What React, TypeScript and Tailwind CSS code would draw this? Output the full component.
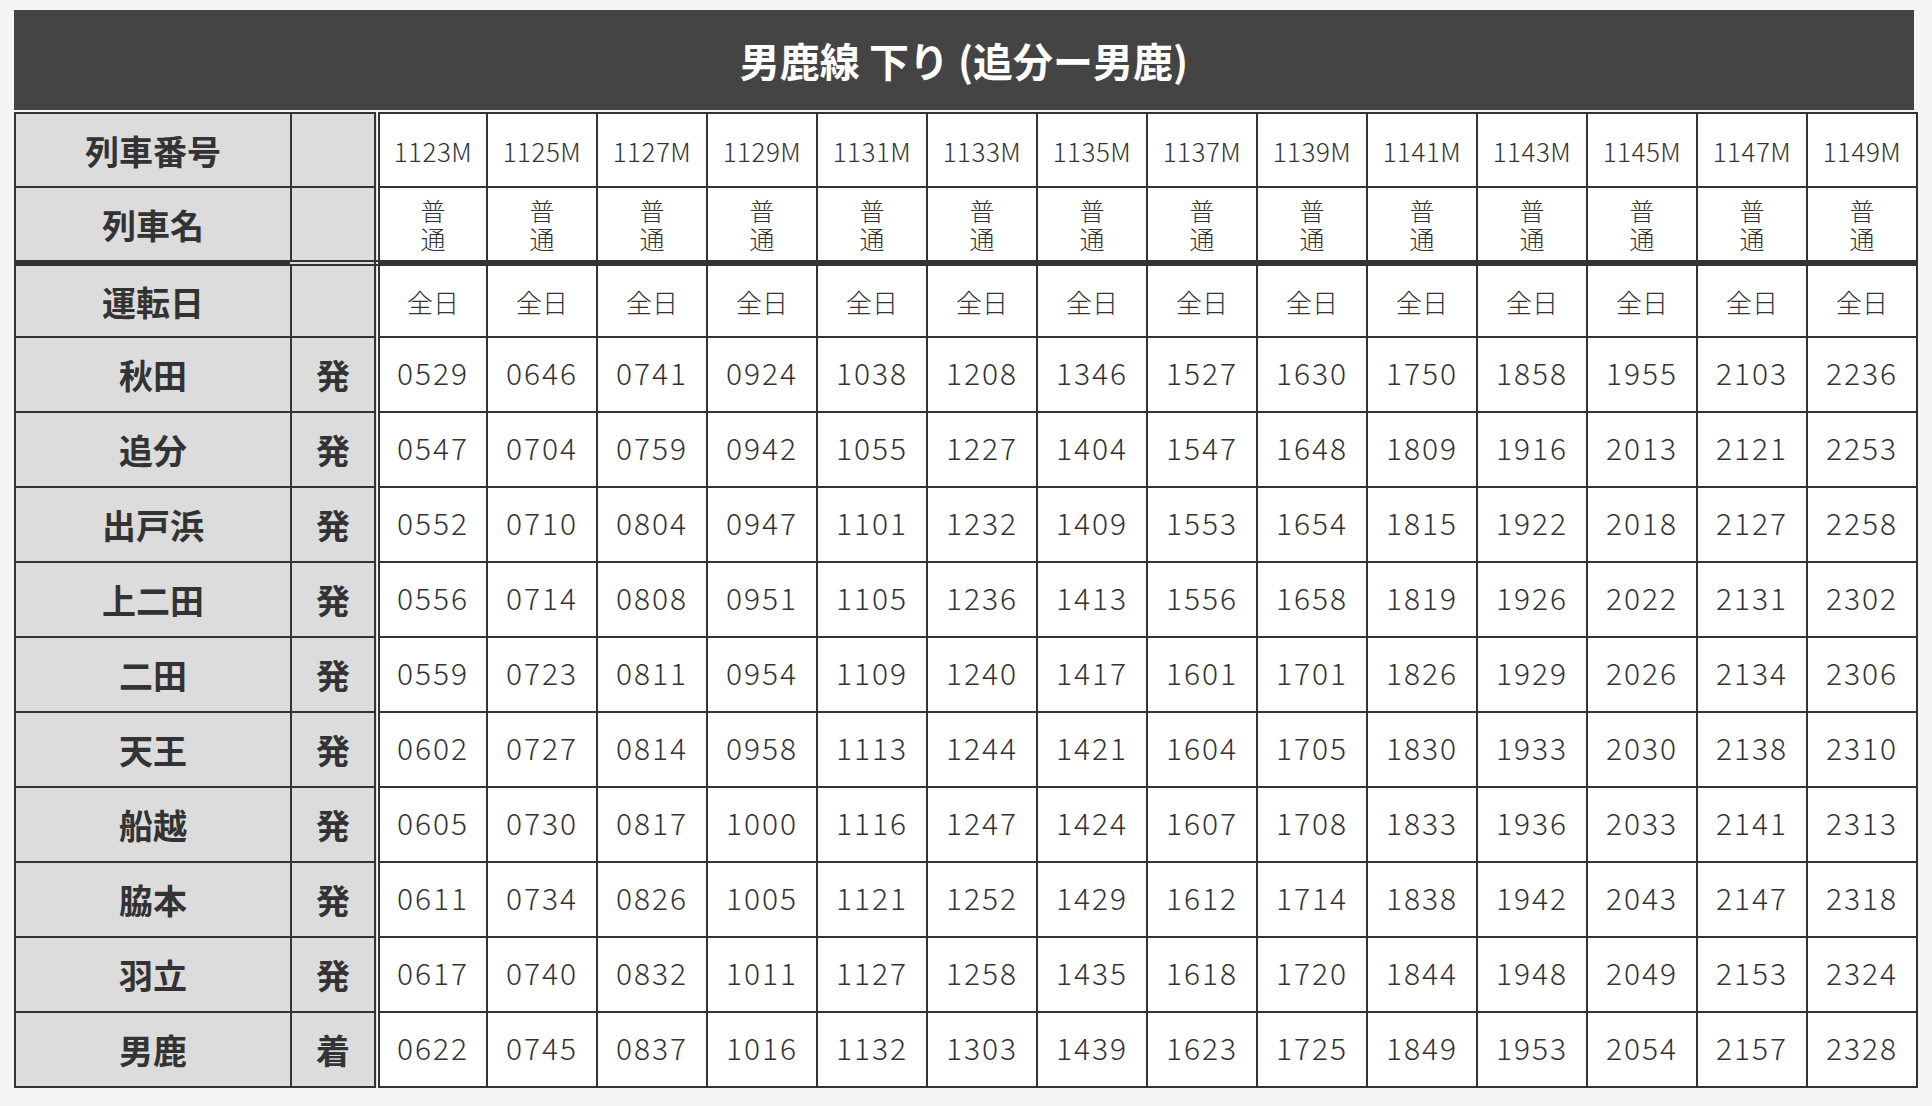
const trains = ["1123M", "1125M", "1127M", "1129M", "1131M", "1133M", "1135M", "1137M", "1139M", "1141M", "1143M", "1145M", "1147M", "1149M"];

const stations: { name: string; kind: string; times: string[] }[] = [
  { name: "秋田", kind: "発", times: ["0529", "0646", "0741", "0924", "1038", "1208", "1346", "1527", "1630", "1750", "1858", "1955", "2103", "2236"] },
  { name: "追分", kind: "発", times: ["0547", "0704", "0759", "0942", "1055", "1227", "1404", "1547", "1648", "1809", "1916", "2013", "2121", "2253"] },
  { name: "出戸浜", kind: "発", times: ["0552", "0710", "0804", "0947", "1101", "1232", "1409", "1553", "1654", "1815", "1922", "2018", "2127", "2258"] },
  { name: "上二田", kind: "発", times: ["0556", "0714", "0808", "0951", "1105", "1236", "1413", "1556", "1658", "1819", "1926", "2022", "2131", "2302"] },
  { name: "二田", kind: "発", times: ["0559", "0723", "0811", "0954", "1109", "1240", "1417", "1601", "1701", "1826", "1929", "2026", "2134", "2306"] },
  { name: "天王", kind: "発", times: ["0602", "0727", "0814", "0958", "1113", "1244", "1421", "1604", "1705", "1830", "1933", "2030", "2138", "2310"] },
  { name: "船越", kind: "発", times: ["0605", "0730", "0817", "1000", "1116", "1247", "1424", "1607", "1708", "1833", "1936", "2033", "2141", "2313"] },
  { name: "脇本", kind: "発", times: ["0611", "0734", "0826", "1005", "1121", "1252", "1429", "1612", "1714", "1838", "1942", "2043", "2147", "2318"] },
  { name: "羽立", kind: "発", times: ["0617", "0740", "0832", "1011", "1127", "1258", "1435", "1618", "1720", "1844", "1948", "2049", "2153", "2324"] },
  { name: "男鹿", kind: "着", times: ["0622", "0745", "0837", "1016", "1132", "1303", "1439", "1623", "1725", "1849", "1953", "2054", "2157", "2328"] },
];

const headCell = "border-2 border-[#333] bg-[#dcdcdc] text-center font-bold text-[34px] text-[#333]";
// double rule between the label columns and the train columns
const kindCell = "border-2 border-r-[6px] border-double border-[#333] bg-[#dcdcdc] text-center font-bold text-[34px] text-[#333]";
const dataCell = "border-2 border-[#333] bg-white text-center text-[#333] font-light p-0";

export default function App() {
  return (
    <div
      className="min-h-screen bg-[#f5f5f5] pt-[10px] pl-[14px] pr-[18px] pb-4"
      style={{ fontFamily: '"Noto Sans CJK JP", "Noto Sans", sans-serif' }}
    >
      <div className="w-[1900px]">
        <div className="h-[100px] bg-[#444] flex items-center justify-center text-white font-bold text-[40px] mb-[2px]">
          男鹿線 下り (追分ー男鹿)
        </div>
        <table className="w-[1898px] table-fixed border-collapse border-2 border-[#333]">
          <colgroup>
            <col className="w-[276px]" />
            <col className="w-[86px]" />
            {trains.map((t) => (
              <col key={t} className="w-[110px]" />
            ))}
          </colgroup>
          <tbody>
            <tr className="h-[74px]">
              <td className={headCell}>列車番号</td>
              <td className={kindCell}></td>
              {trains.map((t) => (
                <td key={t} className={`${dataCell} text-[26px] tracking-[0.5px]`}>
                  {t}
                </td>
              ))}
            </tr>
            <tr className="h-[76px]">
              <td className={`${headCell} border-b-[6px]`}>列車名</td>
              <td className={`${kindCell} border-b-[6px] border-b-[#333]`}></td>
              {trains.map((t) => (
                <td key={t} className={`${dataCell} border-b-[6px] text-[25px] leading-[28px]`}>
                  <div>普</div>
                  <div>通</div>
                </td>
              ))}
            </tr>
            <tr className="h-[74px]">
              <td className={headCell}>運転日</td>
              <td className={kindCell}></td>
              {trains.map((t) => (
                <td key={t} className={`${dataCell} text-[26px]`}>
                  全日
                </td>
              ))}
            </tr>
            {stations.map((s) => (
              <tr key={s.name} className="h-[75px]">
                <td className={headCell}>{s.name}</td>
                <td className={kindCell}>{s.kind}</td>
                {s.times.map((tm, i) => (
                  <td key={i} className={`${dataCell} text-[30px] tracking-[2px] pb-[4px]`}>
                    {tm}
                  </td>
                ))}
              </tr>
            ))}
          </tbody>
        </table>
      </div>
    </div>
  );
}
